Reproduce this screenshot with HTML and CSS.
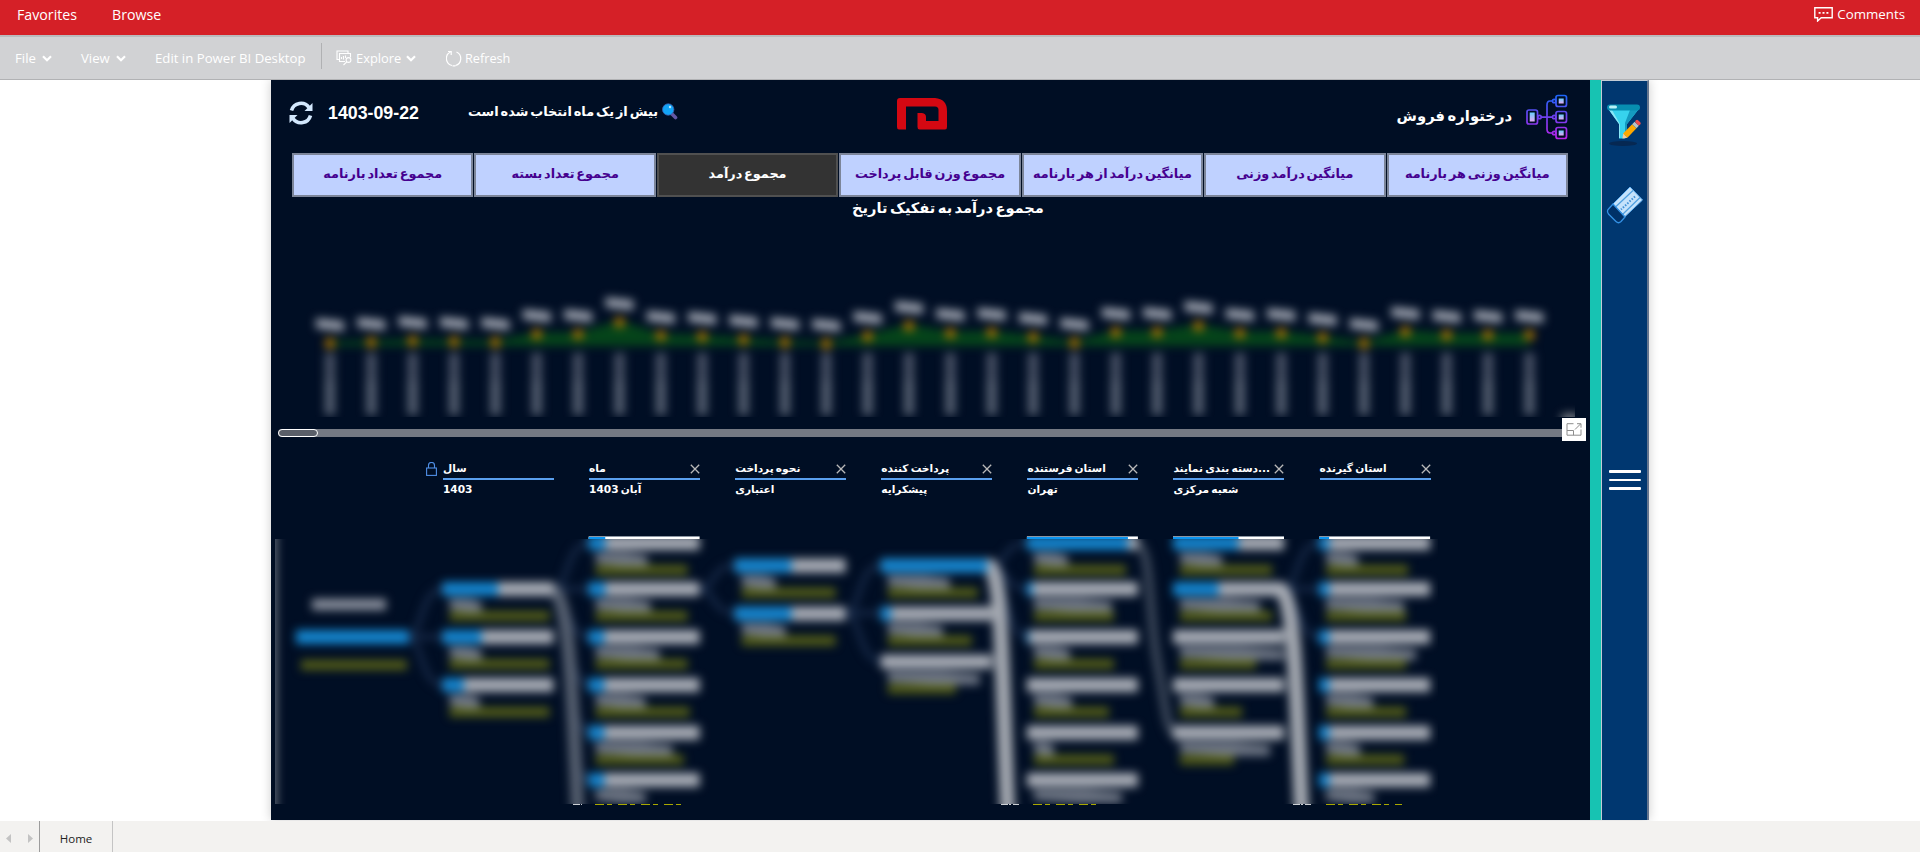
FILE: index.html
```html
<!DOCTYPE html>
<html lang="en">
<head>
<meta charset="utf-8">
<title>Power BI Report Server</title>
<link rel="stylesheet" href="styles.css">
</head>
<body>
<header class="topbar">
  <nav class="topnav"><span class="fav">Favorites</span><span class="browse">Browse</span></nav>
  <div class="comments">
    <svg width="19" height="15" viewBox="0 0 19 15" fill="none" stroke="#fff" stroke-width="1.4"><path d="M.8 .8h17.4v10H7.2L3.6 14v-3.2H.8z"/><path d="M4.6 5.8h2M8.5 5.8h2M12.4 5.8h2" stroke-width="1.8"/></svg>
    <span class="lbl-comments">Comments</span>
  </div>
</header>
<div class="toolbar">
  <span class="tool t-file">File <svg class="chev" width="10" height="7" viewBox="0 0 10 7"><path d="M1 1.2l4 4 4-4"/></svg></span>
  <span class="tool t-view">View <svg class="chev" width="10" height="7" viewBox="0 0 10 7"><path d="M1 1.2l4 4 4-4"/></svg></span>
  <span class="tool t-edit">Edit in Power BI Desktop</span>
  <span class="divider"></span>
  <span class="tool t-explore"><svg width="17" height="16" viewBox="0 0 17 16" fill="none" stroke="#fff" stroke-width="1.1"><path d="M3 9.500H1V1h11v2M9 11.500H3.500V3.500H14.500v4"/><path d="M5.500 9V7M7.500 9.500V6M9.500 8V5.500"/><circle cx="12.500" cy="10" r="2.400"/><path d="M10.800 11.800L7.500 15"/></svg>Explore <svg class="chev" width="10" height="7" viewBox="0 0 10 7"><path d="M1 1.2l4 4 4-4"/></svg></span>
  <span class="tool t-refresh"><svg width="16" height="17" viewBox="0 0 16 17" fill="none" stroke="#fff" stroke-width="1.2"><path d="M4.500 2A7.200 7.200 0 0 0 6 15.500M10.500 2A7.200 7.200 0 0 1 9.500 15.500"/><path d="M2 1.500h3.200V5M6.500 15.900h3"/></svg>Refresh</span>
</div>
<main class="stage">
  <section class="report">
    <div class="canvas">
      <div class="head">
        <svg class="sync" width="24" height="26" viewBox="0 0 24 26"><g fill="none" stroke="#d3e8fd" stroke-width="3.600"><path d="M2.500 10.500a9.800 9.800 0 0 1 17.500-3"/><path d="M21.500 15.500a9.800 9.800 0 0 1-17.500 3"/></g><path fill="#d3e8fd" d="M23.500 3v8h-8zM.5 23v-8h8z"/></svg>
        <b class="date">1403-09-22</b>
        <span class="fa note" dir="rtl">بیش از یک ماه انتخاب شده است</span>
        <svg class="lens" width="16" height="17" viewBox="0 0 16 17"><path d="M9 10l4.500 4.500" stroke="#6258a5" stroke-width="3.600" stroke-linecap="round"/><circle cx="6.200" cy="6.500" r="5.700" fill="#12a4f6" stroke="#3b5fae" stroke-width=".8"/><circle cx="8" cy="4" r="1.200" fill="#b6e8ff"/></svg>
        <svg class="logo" width="50" height="32" viewBox="0 0 50 32"><path fill="#d40812" d="M3 0H38Q50 1 50 13V29Q50 31.500 48 31.500H22.500Q20.500 31.500 20.500 29V15H25Q29 15.500 29 19V23H41.500V12Q41.500 8.500 38 8.500H9V31.500H2Q0 31.500 0 29V3Q0 0 3 0z"/></svg>
        <span class="fa heading" dir="rtl">درختواره فروش</span>
        <svg class="treeicon" width="42" height="46" viewBox="0 0 42 46"><defs><linearGradient id="tg" gradientUnits="userSpaceOnUse" x1="0" y1="0" x2="0" y2="46"><stop offset="0" stop-color="#1769fb"/><stop offset=".5" stop-color="#7040ef"/><stop offset="1" stop-color="#bd21e8"/></linearGradient><linearGradient id="tf" x1="0" y1="0" x2="0" y2="1"><stop offset="0" stop-color="#69cdfa"/><stop offset="1" stop-color="#e3a9f6"/></linearGradient></defs><g fill="none" stroke="url(#tg)" stroke-width="1.700"><rect x="1" y="16" width="10.500" height="14" rx="2"/><rect x="30" y="1.500" width="10.500" height="11" rx="2"/><rect x="30" y="17.500" width="10.500" height="11" rx="2"/><rect x="30" y="33.500" width="10.500" height="11" rx="2"/><path d="M15 23.100h12M27 7h-3q-3 0-3 4v24q0 4 3 4h3"/><circle cx="13.500" cy="23" r="1.700"/><circle cx="28.200" cy="7" r="1.700"/><circle cx="28.200" cy="23" r="1.700"/><circle cx="28.200" cy="39" r="1.700"/></g><g fill="url(#tf)"><rect x="3.700" y="18.500" width="5" height="9"/><rect x="32.700" y="4.500" width="5" height="5"/><rect x="32.700" y="20.500" width="5" height="5"/><rect x="32.700" y="36.500" width="5" height="5"/></g></svg>
      </div>
      <div class="tabs">
        <span class="fa tab">مجموع تعداد بارنامه</span>
        <span class="fa tab">مجموع تعداد بسته</span>
        <span class="fa tab active">مجموع درآمد</span>
        <span class="fa tab">مجموع وزن قابل پرداخت</span>
        <span class="fa tab">میانگین درآمد از هر بارنامه</span>
        <span class="fa tab">میانگین درآمد وزنی</span>
        <span class="fa tab">میانگین وزنی هر بارنامه</span>
      </div>
      <div class="fa charttitle"><span>مجموع درآمد به تفکیک تاریخ</span></div>
      <svg id="trend" class="trend" width="1304" height="197" viewBox="271 220 1304 197"></svg>
      <div class="scroll"><div class="track"><div class="thumb"></div></div>
        <div class="focus"><svg width="16" height="13" viewBox="0 0 16 13" fill="none" stroke="#8d8d8d"><path d="M7.500 .7H1v11.500h14V6.500M1 7.500h6.500v4.700M9 6.500L14.500 1M11 .7h4v4"/></svg></div>
      </div>
      <div class="levels" id="levels"></div>
      <svg id="tree" class="tree" width="1319" height="284" viewBox="271 536 1319 284"></svg>
    </div>
    <div class="accent"></div>
    <aside class="side">
      <svg class="funnel" width="36" height="45" viewBox="0 0 36 45"><ellipse cx="17" cy="40.500" rx="14" ry="2.500" fill="#062852"/><path fill="#37d3ee" d="M3 7h29L21 21v13l-2 1.500h-6V21z"/><path fill="#159bc0" d="M24 7h8L21 21v12h-2V20z"/><path fill="#8ae7f6" d="M3 7h3l8 14v14h-1V21z"/><rect x="1" y="1.500" width="33" height="6" rx="3" fill="#078eb1"/><rect x="3" y="2.500" width="8" height="3" rx="1.500" fill="#b8f1f7"/><g transform="translate(16.500 35.500) rotate(-46)"><path fill="#f9c99b" d="M0 0l4-3v6z"/><rect x="4" y="-3" width="13" height="6" fill="#fda800"/><rect x="17" y="-3" width="3.500" height="6" fill="#b6c2c8"/><rect x="20.500" y="-3" width="3.500" height="6" rx="1.500" fill="#f04b4d"/></g></svg>
      <svg class="eraser" width="38" height="38" viewBox="0 0 38 38"><path fill="#c5e2fb" stroke="#63b1f3" stroke-width="1" d="M24 1L36.500 14 19 30.500 7 18z"/><path fill="none" stroke="#4f9fe0" stroke-width="1.200" d="M27 4.500L10 20.500M34 11.500L17 28"/><path fill="none" stroke="#3f8fd6" stroke-width="2" stroke-dasharray="1.500 1.500" d="M29 10.500L15 23.500"/><path fill="#003168" stroke="#3391e4" stroke-width="1.300" d="M7 18l12 13-4 4.500q-2.500 2.500-5 0L2.500 28Q.500 25 2.500 23z"/></svg>
      <div class="burger"><i></i><i></i><i></i></div>
    </aside>
  </section>
</main>
<footer class="pages">
  <div class="arrows"><svg width="5" height="9" viewBox="0 0 5 9"><path fill="#c3c3c3" d="M5 0v9L0 4.500z"/></svg><svg width="5" height="9" viewBox="0 0 5 9"><path fill="#c3c3c3" d="M0 0v9l5-4.500z"/></svg></div>
  <div class="page">Home</div>
</footer>
<script src="script.js"></script>
</body>
</html>
```
FILE: styles.css
```css
* { box-sizing: border-box; }
body { margin: 0; height: 852px; overflow: hidden; display: flex; flex-direction: column; background: #fff; font-family: "Open Sans", "Noto Sans", sans-serif; }
svg { display: block; flex: none; }
.fa { font-family: "DejaVu Sans", sans-serif; font-weight: bold; white-space: nowrap; word-spacing: -2.6px; }

.topbar { height: 35px; flex: none; background: #d52027; color: #fff; display: flex; justify-content: space-between; align-items: flex-start; padding: 5px 15px 0 17px; font-size: 14.2px; line-height: 20px; }
.topnav { display: flex; gap: 35px; }
.comments { display: flex; align-items: center; gap: 4px; font-size: 13.3px; line-height: 19px; }
.toolbar { height: 45px; flex: none; background: #d1d2d4; border-top: 2px solid #babbbd; border-bottom: 1px solid #b1b2b4; display: flex; align-items: center; padding-left: 15px; color: #fff; font-size: 13.2px; }
.tool { display: flex; align-items: center; gap: 4px; white-space: nowrap; }
.chev { fill: none; stroke: #fff; stroke-width: 2.2; margin-left: 2px; }
.t-file { width: 66px; }
.t-view { width: 74px; }
.t-edit { width: 166px; }
.divider { width: 1px; height: 26px; background: #b0b1b3; margin-right: 14px; margin-bottom: 4px; }
.t-explore { width: 110px; gap: 3px; font-size: 12.9px; }
.t-refresh { font-size: 12.7px; gap: 3px; }

.stage { height: 741px; flex: none; display: flex; padding-left: 271px; overflow: hidden; }
.report { width: 1378px; height: 740px; display: flex; background: #000e24; box-shadow: 0 0 10px rgba(0,0,0,.2); }
.canvas { width: 1319px; display: flex; flex-direction: column; }
.accent { width: 11px; background: #17c3b2; }
.side { width: 48px; background: #003770; border: 1px solid #c3cbd5; border-right: 2px solid #65758e; border-bottom: 0; padding-left: 4px; }
.funnel { margin-top: 22px; }
.eraser { margin-top: 38px; }
.burger { margin: 246px 0 0 3px; width: 32px; display: flex; flex-direction: column; gap: 6px; }
.burger i { height: 2.5px; background: #fff; border-radius: 1px; }

.head { height: 73px; display: flex; padding-left: 18px; color: #fff; }
.sync { margin-top: 20px; }
.date { margin: 23px 0 0 15px; width: 140px; font: bold 17.8px/21px "Liberation Sans", sans-serif; }
.note { margin-top: 21px; width: 190px; font-size: 12.9px; line-height: 22px; }
.lens { margin: 23px 0 0 4px; }
.logo { margin: 18px 0 0 219px; }
.heading { margin: 24px 14px 0 auto; font-size: 14.8px; line-height: 24px; }
.treeicon { margin: 14px 22px 0 0; }

.tabs { height: 44px; margin: 0 22px 0 21px; display: flex; gap: 1px; }
.tab { flex: 1 1 0; border: 2px solid #7c8599; background: #bfd1ff; color: #45008f; font-size: 12.8px; display: flex; align-items: center; justify-content: center; padding-bottom: 3px; }
.active { background: #333; border-color: #505050; color: #fff; }
.charttitle { height: 23px; line-height: 22px; font-size: 14.6px; color: #fff; text-align: center; padding-left: 35px; }
.scroll { height: 25px; display: flex; align-items: flex-start; padding: 1px 0 0 7px; }
.track { width: 1284px; height: 8px; margin-top: 11px; background: #747983; border-radius: 4px 0 0 4px; }
.thumb { width: 40px; height: 8px; border: 1px solid #fff; border-radius: 4px; background: #5a5f69; }
.focus { width: 24px; height: 23px; background: #fff; display: flex; align-items: center; justify-content: center; }

.levels { height: 94px; display: flex; padding: 17px 0 0 155px; }
.lock { margin: 3px 6px 0 0; }
.level { width: 146.1px; flex: none; color: #fff; font-size: 10.6px; word-spacing: -1.5px; }
.levelhead { width: 111px; height: 21px; border-bottom: 2px solid #5a9fee; display: flex; justify-content: space-between; line-height: 19px; }
.levelhead svg { margin: 5px 0 0; }
.value { line-height: 19px; }

.pages { height: 31px; flex: none; background: #f3f2f0; display: flex; font-size: 11.5px; color: #222; }
.arrows { width: 40px; border-right: 1px solid #9c9c9c; display: flex; align-items: center; gap: 17px; padding: 4px 0 0 6px; }
.page { width: 73px; border-right: 1px solid #c4c4c4; text-align: center; line-height: 36px; }
```
FILE: script.js
```js
const rect = (x, y, w, h, fill, o = 1, r = 0) =>
  `<rect x="${x}" y="${y}" width="${w}" height="${h}" rx="${r}" fill="${fill}" opacity="${o}"/>`;

// Income trend
const ys = [343.3,342.3,341,341.7,342.3,334.3,334.3,322.3,335.7,336.7,339.7,342.3,343.7,336.3,326,333.3,332.7,337.3,342.7,332.3,332.3,326,333.3,333.3,337.7,343.3,331.7,335,335,335];
const px = i => 330 + i * 41.36;
let t = '<defs><filter id="soft" color-interpolation-filters="sRGB" filterUnits="userSpaceOnUse" x="260" y="210" width="1330" height="620"><feGaussianBlur stdDeviation="5"/></filter></defs><g filter="url(#soft)">';
t += `<path fill="#05441a" d="M330 346 ${ys.map((y, i) => `L${px(i)} ${y - 2}`).join(' ')} L${px(29)} 346z"/>`;
ys.forEach((y, i) => {
  const x = px(i);
  t += `<path d="M${x - 14} ${y - 25}l28 3v10l-28-3z" fill="#a4aab5" opacity=".95"/>`;
  t += `<circle cx="${x}" cy="${y}" r="5.500" fill="#b57a00" opacity=".9"/>`;
  t += rect(x - 5, 353, 10, 28, '#626a7c', .75) + rect(x - 5, 381, 10, 34, '#737c8c', .75);
});
t += rect(1562, 414, 16, 10, '#bbb', .7) + '</g>';
document.getElementById('trend').innerHTML = t;

// Level headings
const levels = [['سال','1403'],['ماه','آبان 1403'],['نحوه پرداخت','اعتباری'],['پرداخت کننده','پیشکرایه'],['استان فرستنده','تهران'],['دسته بندی نمایند...','شعبه مرکزی'],['استان گیرنده','']];
document.getElementById('levels').innerHTML =
  '<svg class="lock" width="11" height="14" viewBox="0 0 11 14" fill="none" stroke="#4f8fe6" stroke-width="1.100"><rect x=".6" y="6" width="9.800" height="7.400"/><path d="M2.500 6V3.500a3 3 0 0 1 6 0V6"/></svg>' +
  levels.map(([a, b], i) => `<div class="level fa"><div class="levelhead"><span>${a}</span>${i ? '<svg width="10" height="10" viewBox="0 0 10 10" stroke="#b9b9b9" stroke-width="1.300"><path d="M.8 .8l8.400 8.400M9.200 .8L.8 9.200"/></svg>' : ''}</div><div class="value">${b}</div></div>`).join('');

// Decomposition tree: [column, centre y, filled share, name width, value width]
const cx = c => 296.400 + c * 146.1;
const bars = [
  [1,589,.5,32,100],[1,637,.35,32,100],[1,685,.19,30,100],
  [2,543,.15,52,92],[2,589,.15,55,92],[2,637,.14,64,92],[2,685,.14,50,94],[2,732.7,.14,77,88],[2,780,.14,50,0],
  [3,565.7,.51,34,94],[3,613.7,.51,44,94],
  [4,565.7,.96,62,90],[4,613.7,.09,55,84],[4,661.7,0,92,68],
  [5,543,.91,34,92],[5,589,.05,78,80],[5,637,.02,36,80],[5,685,0,38,75],[5,732.7,0,20,80],[5,780,0,88,0],
  [6,543,.59,42,92],[6,589,.41,80,92],[6,637,0,104,76],[6,685,0,34,62],[6,732.7,0,90,54],
  [7,543,.09,32,82],[7,589,.09,78,80],[7,637,.09,90,80],[7,685,.09,47,80],[7,732.7,.09,34,78],[7,780,.09,48,0]
];
let s = '<defs><clipPath id="area"><rect x="275" y="539" width="1163" height="265"/></clipPath><filter id="haze" color-interpolation-filters="sRGB" filterUnits="userSpaceOnUse" x="250" y="500" width="1220" height="340"><feGaussianBlur stdDeviation="4.700"/></filter></defs>';
// crisp upper edges of the first row
[[2,.15],[5,.91],[6,.59],[7,.09]].forEach(([c, f]) => {
  s += rect(cx(c), 536, 111, 1, '#8c96a3') + rect(cx(c), 537, 111, 3, '#fff') + rect(cx(c), 537, 111 * f, 3, '#0b94ef');
});
const link = (d, w, color) => `<path d="${d}" fill="none" stroke="${color}" stroke-width="${w}"/>`;
s += '<g clip-path="url(#area)"><rect x="275" y="539" width="1163" height="265" fill="#000e24"/><g filter="url(#haze)">';
s += rect(268, 520, 9, 310, '#626b78');
const fan = (x, y, x2, targets) => targets.forEach(v => s += link(`M${x} ${y}C${x + 14} ${y} ${x + 12} ${v} ${x2} ${v}`, 5, '#182b4a'));
fan(408, 637, 443, [589, 637, 685]);
fan(554, 589, 589, [543, 589, 637, 685, 732, 780]);
fan(700, 589, 735, [565, 613]);
fan(846, 613, 881, [565, 613, 661]);
fan(992, 565, 1027, [543, 589, 637]);
fan(1284, 589, 1319, [543, 589, 637]);
s += link('M1137 543C1152 550 1148 610 1157 660S1166 727 1174 733', 9, '#3a4658');
s += link('M552 589C570 596 572 690 578 820', 13, '#566070');
s += link('M988 565C1003 572 1001 660 1008 820', 15, '#a4a9b1');
s += link('M1280 589C1296 600 1296 700 1302 820', 15, '#a4a9b1');
s += rect(296, 630, 113, 14, '#1484cd') + rect(312, 599, 74, 11, '#8b919e') + rect(301, 660, 106, 10, '#525c18');
bars.forEach(([c, y, f, n, v]) => {
  const x = cx(c);
  if (v) s += rect(x + 7, y + 22, v, 10, '#525c18');
  s += `<path d="M${x + 7} ${y + 10}h${n * .6}l${n * .4} 3v10h${-n * .5}l${-n * .5} -3z" fill="#858c99" opacity=".85"/>`;
  s += rect(x, y - 7, 111, 14, '#a8adb6') + rect(x, y - 7, 111 * f, 14, '#1484cd');
});
s += '</g></g>';
// tops of the clipped row below
[[595,91],[1033,67],[1326,76]].forEach(([x, w]) => s += `<path d="M${x} 804.500h${w}" stroke="#a8a800" stroke-dasharray="9 3 5 6"/>`);
[[573,9],[1001,18],[1293,18]].forEach(([x, w]) => s += `<path d="M${x} 804.500h${w}" stroke="#ccd0d5" stroke-dasharray="7 1 2 2"/>`);
document.getElementById('tree').innerHTML = s;
```
